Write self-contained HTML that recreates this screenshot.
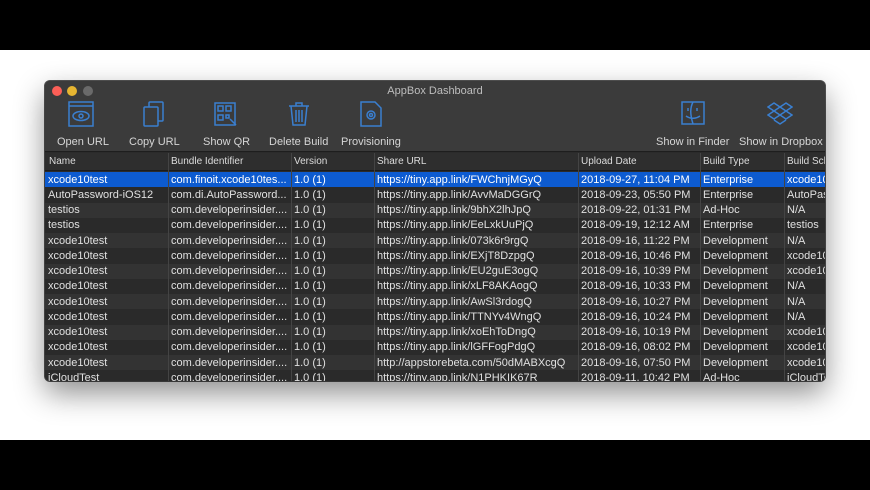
<!DOCTYPE html>
<html><head><meta charset="utf-8"><style>
*{margin:0;padding:0;box-sizing:border-box}
body{width:870px;height:490px;background:#000;position:relative;overflow:hidden;font-family:"Liberation Sans",sans-serif;font-size:11px;color:#e0e0e0}
#white{position:absolute;left:0;top:50px;width:870px;height:390px;background:#fff}
#win{position:absolute;left:45px;top:81px;width:780px;height:300px;background:#2b2b2b;border-radius:5px;overflow:hidden;box-shadow:0 12px 30px rgba(0,0,0,.45),0 0 0 1px #555}
#title{position:absolute;left:0;top:0;width:780px;height:71px;background:#3b3b3b;border-bottom:1px solid #1e1e1e}
.tl{position:absolute;top:5px;width:10px;height:10px;border-radius:50%}
#tt{position:absolute;top:4px;left:0;width:780px;text-align:center;color:#bdbdbd;font-size:11px}
.tb{position:absolute;top:55px;color:#d6d6d6;font-size:11px;white-space:nowrap}
svg.ic{position:absolute;top:20px}
#hdr{position:absolute;top:72px;left:0;width:780px;height:18px;background:#2e2e2e;border-bottom:1px solid #1c1c1c}
.h{position:absolute;top:3px;font-size:10px;color:#dcdcdc;white-space:nowrap}
.sep{position:absolute;top:0;width:1px;height:300px;background:#444}
.row{position:absolute;left:0;width:780px;height:15.25px}
.row span{position:absolute;top:1.5px;white-space:nowrap;overflow:hidden}
</style></head><body>
<div id="white"></div>
<div id="win">
<div id="title">
<div class="tl" style="left:7px;background:#fc5f57"></div>
<div class="tl" style="left:22px;background:#e6b531"></div>
<div class="tl" style="left:38px;background:#6a6a6a"></div>
<div id="tt">AppBox Dashboard</div>
<svg class="ic" style="left:23px" width="26" height="26" viewBox="0 0 26 26" fill="none" stroke="#3a7fd0" stroke-width="1.5"><rect x="1" y="1" width="24" height="24"/><line x1="1" y1="5" x2="25" y2="5"/><ellipse cx="13" cy="15" rx="8" ry="4.5"/><circle cx="13" cy="15" r="2"/></svg>
<svg class="ic" style="left:98px" width="22" height="26" viewBox="0 0 22 26" fill="none" stroke="#3a7fd0" stroke-width="1.5"><rect x="6" y="1" width="14" height="19" rx="1"/><rect x="1" y="6" width="14" height="19" rx="1" fill="#3b3b3b"/></svg>
<svg class="ic" style="left:168px" width="26" height="26" viewBox="0 0 26 26" fill="none" stroke="#3a7fd0" stroke-width="1.5"><rect x="2" y="2" width="20" height="22"/><rect x="5" y="5" width="5" height="5"/><rect x="13" y="5" width="5" height="5"/><rect x="5" y="14" width="5" height="5"/><path d="M13 14h3v3h-3zM17 18l6 6"/></svg>
<svg class="ic" style="left:243px" width="22" height="26" viewBox="0 0 22 26" fill="none" stroke="#3a7fd0" stroke-width="1.5"><path d="M1 5h20M8 5V2h6v3M3 5l2 19h12l2-19M8 9v12M11 9v12M14 9v12"/></svg>
<svg class="ic" style="left:315px" width="22" height="26" viewBox="0 0 22 26" fill="none" stroke="#3a7fd0" stroke-width="1.5"><path d="M1 1h14l6 6v18H1z"/><circle cx="11" cy="14" r="4"/><circle cx="11" cy="14" r="1.5"/></svg>
<svg class="ic" style="left:636px" width="24" height="24" viewBox="0 0 24 24" fill="none" stroke="#3a7fd0" stroke-width="1.5"><rect x="1" y="1" width="22" height="22"/><path d="M12 1c-3 6-3 12 0 22M5 15c4 3 10 3 14 0M7 7v3M16 7v3"/></svg>
<svg class="ic" style="left:722px" width="26" height="24" viewBox="0 0 26 24" fill="none" stroke="#3a7fd0" stroke-width="1.5"><path d="M7 2l6 4-6 4-6-4zM19 2l6 4-6 4-6-4zM7 10l6 4-6 4-6-4zM19 10l6 4-6 4-6-4zM7 19l6 4 6-4"/></svg>
<div class="tb" style="left:12px">Open URL</div>
<div class="tb" style="left:84px">Copy URL</div>
<div class="tb" style="left:158px">Show QR</div>
<div class="tb" style="left:224px">Delete Build</div>
<div class="tb" style="left:296px">Provisioning</div>
<div class="tb" style="left:611px">Show in Finder</div>
<div class="tb" style="left:694px">Show in Dropbox</div>
</div>
<div id="hdr">
<span class="h" style="left:4px">Name</span>
<span class="h" style="left:126px">Bundle Identifier</span>
<span class="h" style="left:249px">Version</span>
<span class="h" style="left:332px">Share URL</span>
<span class="h" style="left:536px">Upload Date</span>
<span class="h" style="left:658px">Build Type</span>
<span class="h" style="left:742px">Build Sch</span>
</div>
<div id="rows"></div>
<div class="sep" style="left:123px;top:72px"></div>
<div class="sep" style="left:246px;top:72px"></div>
<div class="sep" style="left:329px;top:72px"></div>
<div class="sep" style="left:533px;top:72px"></div>
<div class="sep" style="left:655px;top:72px"></div>
<div class="sep" style="left:739px;top:72px"></div>
</div>
<script>
var d=[
["xcode10test","com.finoit.xcode10tes...","FWChnjMGyQ","2018-09-27, 11:04 PM","Enterprise","xcode10test"],
["AutoPassword-iOS12","com.di.AutoPassword...","AvvMaDGGrQ","2018-09-23, 05:50 PM","Enterprise","AutoPassword"],
["testios","com.developerinsider....","9bhX2lhJpQ","2018-09-22, 01:31 PM","Ad-Hoc","N/A"],
["testios","com.developerinsider....","EeLxkUuPjQ","2018-09-19, 12:12 AM","Enterprise","testios"],
["xcode10test","com.developerinsider....","073k6r9rgQ","2018-09-16, 11:22 PM","Development","N/A"],
["xcode10test","com.developerinsider....","EXjT8DzpgQ","2018-09-16, 10:46 PM","Development","xcode10test"],
["xcode10test","com.developerinsider....","EU2guE3ogQ","2018-09-16, 10:39 PM","Development","xcode10test"],
["xcode10test","com.developerinsider....","xLF8AKAogQ","2018-09-16, 10:33 PM","Development","N/A"],
["xcode10test","com.developerinsider....","AwSl3rdogQ","2018-09-16, 10:27 PM","Development","N/A"],
["xcode10test","com.developerinsider....","TTNYv4WngQ","2018-09-16, 10:24 PM","Development","N/A"],
["xcode10test","com.developerinsider....","xoEhToDngQ","2018-09-16, 10:19 PM","Development","xcode10test"],
["xcode10test","com.developerinsider....","lGFFogPdgQ","2018-09-16, 08:02 PM","Development","xcode10test"],
["xcode10test","com.developerinsider....","*http://appstorebeta.com/50dMABXcgQ","2018-09-16, 07:50 PM","Development","xcode10test"],
["iCloudTest","com.developerinsider....","N1PHKIK67R","2018-09-11, 10:42 PM","Ad-Hoc","iCloudTest"]];
var h="",L=[3,126,249,332,536,658,742],W=[118,118,80,200,118,80,40];
d.forEach(function(r,i){
var bg=i==0?"#0d5bd0":(i%2?"#2a2a2a":"#333333");
var u=r[2][0]=="*"?r[2].slice(1):"https://tiny.app.link/"+r[2];
var c=[r[0],r[1],"1.0 (1)",u,r[3],r[4],r[5]];
h+='<div class="row" style="top:'+(91+i*15.25)+'px;background:'+bg+(i==0?';color:#fff':'')+'">';
c.forEach(function(t,j){h+='<span style="left:'+L[j]+'px;width:'+W[j]+'px">'+t+'</span>'});
h+='</div>';});
document.getElementById("rows").innerHTML=h;
</script>
</body></html>
